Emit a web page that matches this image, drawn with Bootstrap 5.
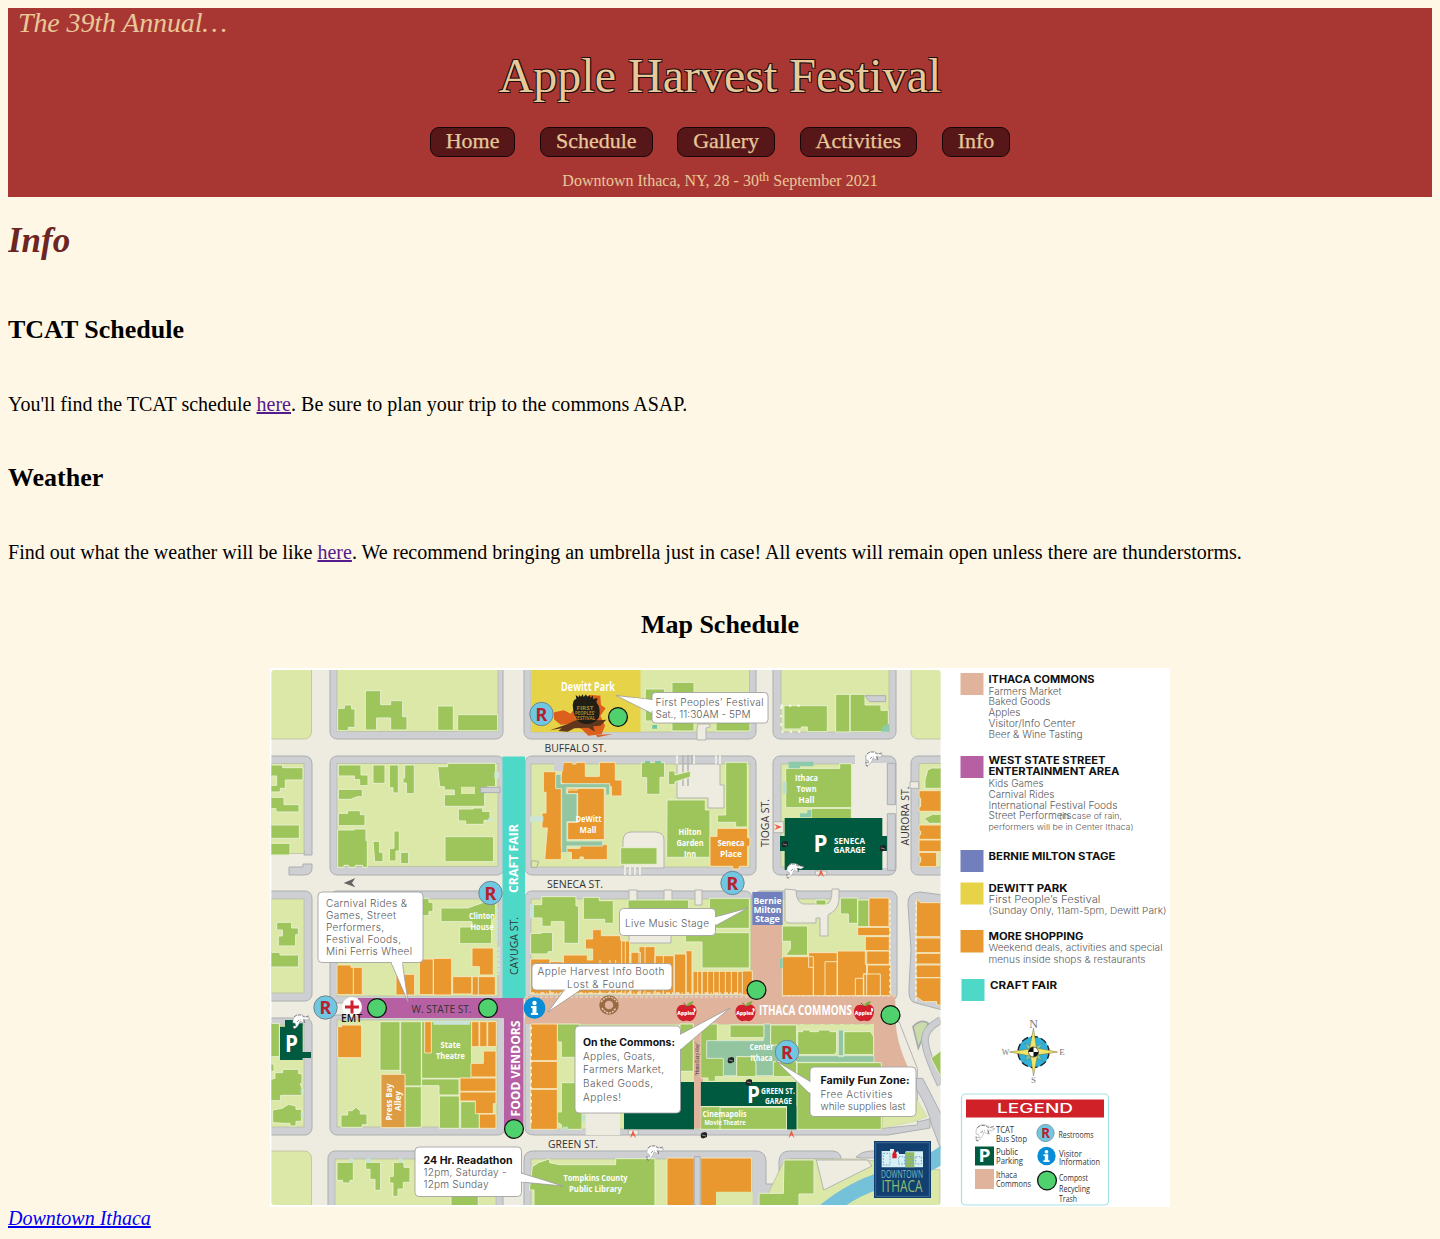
<!DOCTYPE html>
<html lang="en">
<head>
<meta charset="utf-8">
<meta name="viewport" content="width=device-width, initial-scale=1">
<title>Apple Harvest Festival - Info</title>
<link href="https://cdn.jsdelivr.net/npm/bootstrap@5.3.0/dist/css/bootstrap.min.css" rel="stylesheet">
<style>
body{margin:8px;background:#fff7e6;color:#000;font-family:"Liberation Serif",serif;font-size:20px;line-height:22px}
.fest-header{background:#a83733;color:#e8c799;height:189px}
.annual{font-size:28px;line-height:30px;font-style:italic;padding-left:10px;letter-spacing:-.12px}
.fest-title{font-size:48px;line-height:54px;font-weight:400;margin:11px 0 24px;text-shadow:-1px -1px 0 #1c100c,1px -1px 0 #1c100c,-1px 1px 0 #1c100c,1px 1px 0 #1c100c}
.fest-nav{gap:24.5px;height:30px}
.fest-nav a{font-size:22px;line-height:24px;color:#e8c799;background:#571719;border:1px solid #150607;border-radius:9px;padding:1px 15px 3px;text-decoration:none;-webkit-text-stroke:.25px #e8c799}
.fest-date{font-size:16px;line-height:18px;margin-top:15px}
.fest-date sup{font-size:13.3px;line-height:0;top:-.4em}
.page-title{font-size:35px;line-height:40px;font-style:italic;font-weight:700;color:#6b2624;margin:24px 0 54px}
.section-title{font-size:26px;line-height:30px;font-weight:700;margin:0}
.copy{margin:48px 0;letter-spacing:.015px}
.copy a{color:#551a8b}
.map-title{margin-top:-1px;margin-bottom:28px}
.fest-map{width:900px;height:539px}
.foot{line-height:22px;font-style:italic}
.foot a{color:#0000ee}
.curb{fill:#cdcfd2;stroke:#acafb0;stroke-width:1}
.s3 .curb,.s3 .road{stroke-width:3}
.grass{fill:#dce8a7;stroke:#b4b9a2;stroke-width:.7}
.road{fill:#eeebe0;stroke:#b3b5b3;stroke-width:1}
.g{fill:#9dc55b;stroke:#e8f0cf;stroke-width:3}
.o{fill:#e8982e;stroke:#f6e5b9;stroke-width:3}
.t{fill:#93c5a1;stroke:#d5e8cc;stroke-width:3}
.dk{fill:#005a3f}
.cm{fill:#e0b49c}
.pl{fill:#b65fa3}
.tq{fill:#4dd8c8}
.call{fill:#fff;stroke:#999;stroke-width:.8}
.fest-map text{font-family:"Open Sans",sans-serif;fill:#333}
.fest-map .go text{font-family:Inter,"Open Sans",sans-serif;font-size:10.1px;fill:#5b5b5b;font-weight:300}
.fest-map .go text.b{font-weight:700;fill:#111;font-size:9.8px}
.fest-map .w text{fill:#fff;font-weight:700;font-size:8.6px}
.fest-map .st text{font-size:11.4px}
.fest-map .lg text{font-size:9px}
</style>
</head>
<body>
<header class="fest-header">
  <div class="annual">The 39th Annual…</div>
  <h1 class="fest-title text-center">Apple Harvest Festival</h1>
  <nav class="fest-nav d-flex justify-content-center">
    <a href="#">Home</a><a href="#">Schedule</a><a href="#">Gallery</a><a href="#">Activities</a><a href="#">Info</a>
  </nav>
  <div class="fest-date text-center">Downtown Ithaca, NY, 28 - 30<sup>th</sup> September 2021</div>
</header>
<main>
  <h2 class="page-title">Info</h2>
  <h3 class="section-title">TCAT Schedule</h3>
  <p class="copy">You'll find the TCAT schedule <a href="#">here</a>. Be sure to plan your trip to the commons ASAP.</p>
  <h3 class="section-title">Weather</h3>
  <p class="copy">Find out what the weather will be like <a href="#">here</a>. We recommend bringing an umbrella just in case! All events will remain open unless there are thunderstorms.</p>
  <h3 class="section-title map-title text-center">Map Schedule</h3>
  <svg class="fest-map d-block mx-auto" viewBox="270 668 900 539" role="img" aria-label="Festival map">
    <defs>
      <clipPath id="mapclip"><rect x="271.5" y="670" width="669" height="535" rx="3"/></clipPath>
      <g id="rr"><circle r="11.7" fill="#6fc7e2" stroke="#718790" stroke-width="1"/><text y="6.500" text-anchor="middle" style="font-family:'Noto Sans';font-size:18px;font-weight:700;fill:#b91f2e">R</text></g>
      <circle id="dot" r="9.4" fill="#4fd26d" stroke="#111" stroke-width="1.3"/>
      <g id="inf"><circle r="10.8" fill="#078cd6"/><circle cy="-5" r="2.200" fill="#fff"/><path d="M-3.500-2H2V5H3.600V7H-3.600V5H-2V0H-3.500Z" fill="#fff"/></g>
      <g id="apple"><path d="M0-6C-5-9-10-6-10 0C-10 6-5 10-2 9Q0 8 2 9C6 10 10 5 10-1C10-7 5-9 0-6Z" fill="#d21f2b"/><path d="M0-6Q1-10 7-11Q6-6 0-6" fill="#7dab3d"/><path d="M0-5Q-1-8-3-9" fill="none" stroke="#7c5030"/><text x="-.5" y="2.500" text-anchor="middle" style="font-size:5px;font-weight:800;fill:#fff">Apples</text><path d="M7-4Q10-4 9-1L7 1Q8-1 7-2Z" fill="#fff"/></g>
      <g id="cow"><path d="M-8 2Q-9-3-5-6Q0-8 5-4L9-3L6-1L2-2L3 2L-1 0L-2 3L-4 6L-7 8L-8 5L-5 5L-6 2Z" fill="#fff" stroke="#999" stroke-width=".5"/><path d="M-7-4Q-2-8 3-4L8-5M-4 1Q-2-2 0-1M3-1L4 3M-6 8Q-9 9-8 4" fill="none" stroke="#444" stroke-width=".6" stroke-dasharray="3 1.300"/></g>
      <path id="arr" d="M-3 4L0-4L3 4L0 1Z" fill="#ef5a45"/>
      <g id="bike"><circle cx="-1" cy="1" r="2.400" fill="#222"/><path d="M-3-2L1-3L3-2V2L0 3Z" fill="#222"/><path d="M-2 0L2 1" stroke="#888"/></g>
    </defs>
    <rect x="270" y="668" width="900" height="539" fill="#fff"/>
    <g clip-path="url(#mapclip)">
      <rect x="271" y="669" width="670" height="537" fill="#eeebe0"/>
      <!-- city blocks: kerb, then grass -->
      <g class="curb">
        <rect x="330" y="660" width="173" height="79" rx="7"/><rect x="524" y="660" width="232" height="79" rx="7"/><rect x="773" y="660" width="123" height="79" rx="7"/>
        <path d="M264 756H304Q312 756 312 764V855H304V850H264Z"/><path d="M289 867H303V864H312V868Q312 875 304 875H289Z"/>
        <rect x="330" y="756" width="174" height="119" rx="7"/><rect x="525" y="756" width="231" height="119" rx="7"/><rect x="773" y="756" width="123" height="119" rx="7"/><rect x="911" y="756" width="60" height="119" rx="7"/>
        <rect x="250" y="891" width="62" height="110" rx="7"/><rect x="330" y="891" width="174" height="112" rx="7"/><rect x="525" y="891" width="227" height="110" rx="7"/><rect x="754" y="891" width="143" height="110" rx="7"/>
        <path d="M908 905Q907 892 920 892L950 896V1012L916 1003Q908 1002 909 988L911 950Z"/>
        <rect x="250" y="1018" width="62" height="117" rx="7"/><rect x="330" y="1015" width="175" height="120" rx="7"/>
        <path d="M525 1018H890V1128L930 1119V1128L888 1135H535Q525 1135 525 1128Z"/>
        <rect x="328" y="1151" width="175" height="70" rx="7"/><path d="M524 1220V1160Q524 1151 534 1151H757Q766 1152 766 1162V1184H779V1162Q779 1151 790 1151H833Q842 1152 841 1161Q837 1164 834 1159H790V1220Z"/>
        <path d="M856 1157Q862 1151 870 1151H930V1158H861Z"/>
      </g>
      <g class="grass">
        <rect x="260" y="660" width="51.500" height="79" rx="7"/><rect x="337" y="660" width="161" height="71.500"/><rect x="531" y="660" width="218.500" height="72"/><rect x="781" y="660" width="108" height="72"/><rect x="911" y="660" width="60" height="79" rx="7"/>
        <rect x="260" y="763.500" width="44" height="90"/><rect x="337" y="763.500" width="161" height="103"/><rect x="531" y="764" width="219" height="103"/><rect x="781" y="764" width="107" height="103"/><rect x="919" y="763.500" width="40" height="103.500"/>
        <rect x="260" y="899" width="44" height="94"/><rect x="337" y="899" width="161" height="97"/><rect x="531" y="899" width="220" height="96"/><rect x="781" y="899" width="108" height="97"/>
        <rect x="260" y="1025" width="44" height="102"/><rect x="337" y="1020" width="160" height="107"/><rect x="531" y="1024" width="352" height="105"/>
        <rect x="260" y="1151" width="51.500" height="70" rx="7"/><rect x="335" y="1159" width="161" height="60"/><rect x="531" y="1159" width="221" height="60"/><path d="M785 1159H860L940 1170V1210H760Z"/>
      </g>
      <g class="road"><path d="M677 764V798H708V808H724V785H720V764Z"/><path d="M623 868V840Q624 832 631 832H656Q664 833 664 840V868Z"/><path d="M855 755H865V763H888V805H896V814H888V868H852V764H855Z" stroke="none"/><path d="M697 729V740H706V728L710 727V724H698Z"/><path d="M629 930H671V943H629ZM629 890H637V905H629ZM664 890H672V915H664ZM695 890H702V905H695Z"/><path d="M785 889V920Q785 923 790 923H816V918H820V936H828V915Q838 910 839 900V889H832Q832 904 826 904H803Q796 902 796 890Z"/></g>
      <path d="M683 755V786M688 755V786M692 755V764" stroke="#b3b5b3" stroke-width="1.500" fill="none"/><path d="M677 755.500V764M694 755.500V764M716 755.500V764M720 755.500V764" stroke="#eeebe0" stroke-width="2"/><path d="M625 866V875M630 866V875M635 866V875M640 866V875" stroke="#eeebe0" stroke-width="2" fill="none"/>
      <!-- festival streets -->
      <path class="cm" d="M525 996H752V924H782V995H895L897 1040L910 1067V1070H882V1024H703V1128H694V1024H525Z"/>
      <path d="M525 997H751M782 996H895" stroke="#efe2cb" stroke-dasharray="3 2" fill="none"/>
      <path d="M800 1025H881V1066" stroke="#dce8a7" stroke-width="2" stroke-dasharray="4 6" fill="none"/>
      <rect class="tq" x="502.500" y="756.500" width="22.500" height="242"/><path class="pl" d="M358 998H523.500V1130H504V1018H358Z"/>
      <rect x="531.500" y="668" width="109" height="64" fill="#e6d348"/>

      <g class="s3" transform="translate(270 665) scale(.33333)">
        <g class="g"><path d="M203 130h20v-10h22v12h10v55h-20v10h-32z"/><path d="M286 77h46v42h30v-12h36v48h13v40h-49v-36h-42v36h-34z"/><path d="M503 123h47v73h-47zM563 149h120v48h-120z"/>
        <path d="M0 300h38v8h61v37h-53v25h-15v11h-31v-20h20v-28h-20zM0 397h42v22h45v22h-69v-10h-18zM0 480h88v40h-88zM0 535h60v35h-60z"/>
        <path d="M205 300h68v30h21v32h-25v-18h-16v-11h-48zM309 300h36v55h-36zM358 300h27v84h-16v-16h-11zM404 300h29v86h-24v-32h-10v-15h5z"/>
        <path d="M503 305h30v-10h144v70h-25v21h-8v38h-121v-35h30v-14h-30v-10h-14z"/><path d="M205 373h72v22h-15l-20 8h-37zM205 445h28v-8h38v12h14v33h-80zM203 495h50v-3h35v35h4v80h-14v-6h-22v6h-20v-6h-14v6h-19z"/><path d="M565 432h45v-3h28v10h22v27h-18v12h-55v-10h-22zM525 515h146v75h-146zM309 529h20v33h10v28h-25zM372 498h16v60h-10v30h-20v-38h14zM392 562h24v34h-24z"/></g>
        <path fill="#dce8a7" d="M573 365h42v22h-42z"/><path class="curb" d="M632 367h58v16h-58z"/><path fill="#cfe5d7" d="M673 322h14v18h-14zM655 459h15v10h-15z"/>
      </g>

      <g class="s3" transform="translate(500 665) scale(.33333)">
        <g class="g"><path d="M436 72h58v28h22v-48h66v146h-66v-60h-22v30h-58zM648 165h102v33h-102zM424 292h70v45h-14v51h-40v-50h-16zM505 318h20v12l46-12v18l-46 15v8h-20zM652 450h25v-158h65v194h-35v-14h-55zM501 405h115v30h14v142h-130zM362 548h109v50h-109z"/></g>
        <g class="o"><path d="M190 292h28v5h10v-5h28v42h42v-42h48v53h20v48h-32v-28h-102v10h-42v-20h-10zM130 320h38v25h16v205h56v-12h82v46h-72v-8h-10v8h-26v-22h-30v22h-50l8-95h-16v-45h12v-62h-8zM203 370h110v154h-110v-52h30v-86h-30z"/><path d="M651 490h92v28h7v26h-7v60h-25v8h-20v-8h-68v-90h21z"/></g>
        <path class="t" d="M167 328h16v28h146v34h-12v-22h-118v18h32v84h-30v58h107v15h-107v20h-16v-192h-18z"/>
        <path d="M90 454h40v16h-40z" fill="#cce5d4"/><path d="M162 292h28v26h-28z" fill="#cdcfd2"/>
        <g fill="#6fc3a1"><path d="M435 289h15v6h-15zM465 289h18v6h-18zM457 180h14v11h-14z"/></g>
        <!-- First Peoples emblem -->
        <path d="M162 142l30-6 20 10 38-50 25-6 26 2 2 28 14 10-16 22 14 30-10 26-40 4-20-20-37-15-26 2-20-16z" fill="#dc5f1c"/><path d="M150 196l55-20q50-26 90-10l24-2-18 18-22 2 6 16-20-12-42 2-20 10-28-2 10-8z" fill="#60371c"/><path d="M219 130q-3-26 10-28l-2-12 9 7 1-7 6 5 5-7 3 8 7-8 4 8 7-6 2 8 8-6v10l14-3-4 12q16 20 7 48-15 20-40 18-31-2-37-47z" fill="#211e16"/><path d="M288 210l50-3-45 10z" fill="#dc5f1c"/>
      </g>

      <g class="s3" transform="translate(730 665) scale(.33333)">
        <g class="g"><path d="M162 122h130v78h-60v-14h-18v6h-52zM317 88h43v113h-43zM360 88h45v32h48v16h22v64h-115zM167 310h162v-14h36v132h-198zM244 430h120v32h-120zM585 370v-25l8-30 12-6h30v61zM583 460l25-12h30v27h-40z"/></g>
        <g class="o"><path d="M567 377h70v62h-70v-12l5-2v-25l-5-3zM567 480h70v43h-70v-12l5-2v-10l-5-3zM567 525h70v35h-70zM567 562h53v43h-53v-12l5-2v-15l-5-3z"/></g>
        <g class="curb"><path d="M405 92h62v18h-48z"/></g>
        <path d="M152 122h65M154 125v75h60" stroke="#f4f7ea" stroke-width="7" stroke-dasharray="7 18" fill="none"/>
        <g fill="#8bcbab"><path d="M176 290h74v14h-40v6h-34zM210 445h22v-10h12v22h-34zM454 200q0-20 24-23v23z"/><path d="M158 350h12v36h-12z" fill="#bcdfcb"/></g>
        <path class="curb" d="M472 295h24v124h-24zM472 446h24v170h-24z" stroke="none"/>
        <path class="dk" d="M164 459h293v54h14v45h-14v57h-293v-57h-14v-45h14z"/><path class="road" d="M131 470h30v33h-30zM256 618h34v12h-34zM540 350h26v20h-26z" stroke="none"/>
      </g>

      <g class="s3" transform="translate(270 840) scale(.33333)">
        <g class="g"><path d="M20 247h45v17h20v20h-8v34h-52v-30h12v-18h-17zM0 337h30v8h56v36h-86zM455 175h22v12h12v28h-12v12h-22zM513 204h80l70-25h14v60h-12v72h-96v-50h37v-16h-93z"/></g>
        <g class="o"><path d="M201 375h42v7h34v82h-76zM250 382v82M378 403h56v62h-56zM448 357h42v107h-42zM490 355h55v110h-55zM548 410h58v52h-58zM606 410h70v55h-70zM606 324h64v81h-42v-25h-22zM625 410v55"/></g>
        <path d="M680 205v100M685 320v85" stroke="#cde5d6" stroke-width="9" stroke-dasharray="12 4"/>
        <path d="M221 129l35-15-10 15 10 13z" fill="#666"/>
      </g>

      <g class="s3" transform="translate(500 840) scale(.33333)">
        <g class="g"><path d="M125 170h103v28h8v112h-44v-65h-38v14h-28v-25h-32v-40h31zM250 172h48v10h42v68h-26v-12h-64zM92 280h32v-3h34v58h-14v7h-52zM384 180h182v80h-182zM628 175h120v90h-120zM606 278h142v106h-142v-78h-50v-20h50z"/></g>
        <g class="o"><path d="M92 357h58v105h-58zM150 365h40v97h-40zM190 345h72v15h16v-33h-22v-30h22v-28h26v18h58v14h14v160h-186zM365 303h24v160h-24zM393 337h28v126h-28zM417 320h48v143h-48zM465 347h58v116h-58zM522 342h36v121h-36zM558 332h18v131h-18z"/><path d="M579 394h27v69h-27zM593 394v69M606 394h150v69h-150zM623 394v69M641 394v69M658 394v69M676 394v69M694 394v69M713 394v69"/><path d="M300 360v100M330 360v100M347 360v100M435 320v143M490 347v116"/></g>
        <path d="M92 460h640" stroke="#f3dfbd" stroke-width="6" stroke-dasharray="12 6 3 8"/>
        <path d="M94 62l22 2-6 18h-16z" fill="#dce8a7" stroke="#afb0a2" stroke-width="3"/><path d="M90 192h12v42h-12z" fill="#c9e3d8"/>
      </g>

      <g class="s3" transform="translate(730 870) scale(.33333)">
        <g class="g"><path d="M157 168h76v88h-66l14-20v-22h-24zM258 90h30v15h-30zM331 84h52v76h-28v-28h-24zM383 90h34v80h-34z"/></g>
        <g class="o"><path d="M157 260h93v117h-93zM236 248h86v129h-72v-85h-14zM285 275h37v102h-37zM322 243h88v134h-88zM376 325h25v52h-25zM417 84h60v86h-60zM383 172h97v25h-97zM406 200h72v42h-72zM406 243h72v40h-72zM412 285h70v92h-82v-65h12zM401 312h50v65h-50zM560 88l12 10h60v102h-74zM558 204h74v44h-74zM558 250h74v32h-74zM558 285h74v38h-74zM558 323h74v82h-12v-10h-40l-22-15zM37 303h30v72H37z"/></g>
        <path d="M480 90v285M558 95v300" stroke="#f7efd6" stroke-width="5" stroke-dasharray="8 9"/>
        <path fill="#7180bd" d="M67 66h91v99h-91z"/><path d="M150 265h8v30h-8z" fill="#8bcbab"/>
        <path d="M549 470q25-25 46-10l-30 75z" fill="#c9dcaa" stroke="#a7aaac" stroke-width="5"/>
      </g>

      <g class="s3" transform="translate(270 1020) scale(.33333)">
        <g class="g"><path d="M0 10h28v100H0zM38 148h48v13h10v30h-5l5 15v20h-64v16h-37v-62l20-5v-17h23zM8 270l28-5 20-12 22 5v10h17v36h-17v14h-18v-8h-20l-32-2zM330 5h60v146h-60zM392 5h62v193h-62zM404 200h50v122h-50zM455 5h150v170h-150zM455 177h112v48h-60v-28h-52zM508 228h60v97h-60zM572 245h56v80h-56zM213 285h20v-13h14l10-10 14 10v10h20v32h-14v8h-64zM201 427h49v54h-10v8h-22v-8h-17zM287 427h45v84h-17v-33h-15v-30h-13zM370 427h32v15h18v45h-20v20h-16v22h-15v-40h-10v-20h11zM543 520h82v50h-82zM0 132h12v22H0z"/></g>
        <g class="o"><path d="M203 20h12v-5h60v98h-72zM464 5h20v94h-20zM605 5h22v75h-22zM629 5h22v75h-22zM653 5h26v75h-26zM603 130h37v-37h38v78h-75zM570 174h108v40h-108zM570 216h108v35h-8v30h-54v-38h-46zM628 282h50v43h-50z"/><path d="M333 163h72v160h-72z" fill="#dd9c42"/></g>
        <path class="dk" d="M30 20h15V0h40v10h13v86h25v18h-25v6h-68z"/>
        <g fill="#c9e3d8"><path d="M92 208h10v12h-10zM92 278h10v12h-10zM237 415h13v14h-13zM289 415h13v14h-13zM387 415h10v14h-10zM490 2h110v12h-110z"/></g>
      </g>

      <g class="s3" transform="translate(500 1020) scale(.33333)">
        <path d="M257 180h103v165h-103z" fill="#eeebe0"/>
        <g class="g"><path d="M172 12h66v100h-54v-46h-12zM184 188h62v140h-62v-14l-14-8v-30h14zM540 12h40v142h-40zM602 12h50v50h54v108h-60v14h-22v-10h-22zM602 260h300v68h-300zM97 440l18-12 34-12v12l31 6h167v-18h118v154H102v-60h-14z"/></g>
        <g class="o"><path d="M92 12h80v110h-80zM92 124h80v82h-80zM92 208h80v120h-80zM501 414h82v150h-82zM602 414h153v155h-153z"/></g>
        <path fill="#dce8a7" d="M648 515h110v60H648z"/>
        <path class="dk" d="M372 186h210v142h-210zM602 186h270v72h18v70h-28v-70H602z"/><path class="cm" d="M584 5h18v320h-18z"/><path class="road" d="M385 330h30v14h-30z"/>
        <path d="M93 20v300" stroke="#f4efd6" stroke-width="6" stroke-dasharray="8 12"/><path class="curb" d="M583 410h18v160h-18z"/><path d="M188 320h16v10h-16zM246 285h10v18h-10z" fill="#bfe1cd"/>
      </g>

      <g class="s3" transform="translate(730 1020) scale(.33333)">
        <path class="road" d="M457 5h50l55 140v170l-105 10z" stroke="none"/><path class="grass" d="M457 240h105l30 50-40 15-95 20z"/>
        <path class="cm" d="M432 5h65q2 60 36 135H432z"/><path class="curb" d="M558 205q37 60 47 110l30 80v-110l-57-110h-20z"/><path d="M632 0q-55 30-46 70 4 35 46 125" fill="none" stroke="#afb2b4" stroke-width="23"/><path d="M632 0q-55 30-46 70 4 35 46 125" fill="none" stroke="#cdcfd2" stroke-width="17"/><path class="g" d="M603 115l30-23v80z"/>
        <path d="M270 555q85-70 185-100 100-20 180-80v60q-100 60-195 75-50 18-90 45z" fill="#75c1da"/>
        <g class="t" stroke="none"><path d="M-70 62h170v-50h22v53h75v42h235v20H197v40H-20v-52h-50zM325 30h16v80h-16z"/></g>
        <g class="g"><path d="M0 15h102v38H0zM122 15h78v60q-30-20-50 0h-28zM203 35h15v-5h22v5h25v-5h35v5h20v60l-8 9H203zM342 35h80l9 15v54h-89zM20 110h50l8 20v40H20zM130 125h70v45h-70zM201 128h253v200H201zM162 420h90v102h-45v35H87v-37h73zM-30 262h200v66H-30z"/></g>
        <path class="dk" d="M-30 186h229v142h-28v-70H-30z"/><path class="road" d="M259 420l22 90 145-72-14-18z"/>
        <path d="M432 363h171v171h-171z" fill="#113f70"/><path d="M437 368h161v161h-161z" fill="none" stroke="#426895" stroke-width="3"/><g fill="#d7f0f5"><path d="M455 393h25v-6h12v16l12-10 8 20v29h-57zM502 402h25v-8h52v48h-77z"/></g><path d="M525 397h28v45h-28z" fill="#92bc64"/><path d="M460 400h20v35h-20zM506 410h18v22h-18zM530 410h17v22h-17zM557 410h17v22h-17z" fill="none" stroke="#74a8c4" stroke-width="3" stroke-dasharray="5 4"/><path d="M487 403l6-13 7 13v12h-13z" fill="#d51d2a"/>
      </g>

      <g class="w" text-anchor="middle">
        <text x="588" y="691" textLength="54" lengthAdjust="spacingAndGlyphs" style="font-size:11.500px">Dewitt Park</text>
        <text x="585" y="709.500" textLength="17" lengthAdjust="spacingAndGlyphs" style="font-size:5px;fill:#ae842d">FIRST</text><text x="585" y="714.500" textLength="20" lengthAdjust="spacingAndGlyphs" style="font-size:5px;fill:#ae842d">PEOPLES'</text><text x="585" y="719.500" textLength="21" lengthAdjust="spacingAndGlyphs" style="font-size:5px;fill:#ae842d">FESTIVAL</text>
        <text x="588.500" y="822" textLength="26" lengthAdjust="spacingAndGlyphs">DeWitt</text><text x="588" y="832.500" textLength="17" lengthAdjust="spacingAndGlyphs">Mall</text>
        <text x="690" y="835" textLength="23" lengthAdjust="spacingAndGlyphs">Hilton</text><text x="690" y="846" textLength="27" lengthAdjust="spacingAndGlyphs">Garden</text><text x="690" y="857" textLength="12" lengthAdjust="spacingAndGlyphs">Inn</text>
        <text x="731" y="846" textLength="27" lengthAdjust="spacingAndGlyphs">Seneca</text><text x="731" y="857" textLength="22" lengthAdjust="spacingAndGlyphs">Place</text>
        <text x="806.500" y="781" textLength="23" lengthAdjust="spacingAndGlyphs">Ithaca</text><text x="806.500" y="792" textLength="20" lengthAdjust="spacingAndGlyphs">Town</text><text x="806.500" y="802.500" textLength="16" lengthAdjust="spacingAndGlyphs">Hall</text>
        <text x="820.500" y="852" style="font-size:23px" textLength="14" lengthAdjust="spacingAndGlyphs">P</text><text x="849.500" y="843.500" textLength="31" lengthAdjust="spacingAndGlyphs" style="font-size:9.500px">SENECA</text><text x="849.500" y="852.500" textLength="32" lengthAdjust="spacingAndGlyphs" style="font-size:9.500px">GARAGE</text>
        <text x="482" y="918.500" textLength="26" lengthAdjust="spacingAndGlyphs">Clinton</text><text x="482" y="929.500" textLength="23" lengthAdjust="spacingAndGlyphs">House</text>
        <text x="767.500" y="904" textLength="28" lengthAdjust="spacingAndGlyphs" style="font-size:9.500px">Bernie</text><text x="767.500" y="913" textLength="28" lengthAdjust="spacingAndGlyphs" style="font-size:9.500px">Milton</text><text x="767.500" y="922" textLength="25" lengthAdjust="spacingAndGlyphs" style="font-size:9.500px">Stage</text>
        <text x="805.500" y="1014.500" textLength="93" lengthAdjust="spacingAndGlyphs" style="font-size:14px">ITHACA COMMONS</text>
        <text x="450.500" y="1048" textLength="20" lengthAdjust="spacingAndGlyphs">State</text><text x="450.500" y="1058.500" textLength="29" lengthAdjust="spacingAndGlyphs">Theatre</text>
        <text x="291.500" y="1052" style="font-size:23px" textLength="13" lengthAdjust="spacingAndGlyphs">P</text>
        <text transform="translate(391.500 1102) rotate(-90)" textLength="37" lengthAdjust="spacingAndGlyphs">Press Bay</text><text transform="translate(401 1101) rotate(-90)" textLength="20" lengthAdjust="spacingAndGlyphs">Alley</text>
        <text x="595.500" y="1180.500" textLength="64" lengthAdjust="spacingAndGlyphs">Tompkins County</text><text x="595.500" y="1191.500" textLength="53" lengthAdjust="spacingAndGlyphs">Public Library</text>
        <text x="761.500" y="1050" textLength="24" lengthAdjust="spacingAndGlyphs">Center</text><text x="761.500" y="1060.500" textLength="22" lengthAdjust="spacingAndGlyphs">Ithaca</text>
        <text x="753.500" y="1103" style="font-size:23px" textLength="13" lengthAdjust="spacingAndGlyphs">P</text><text x="778" y="1094" textLength="34" lengthAdjust="spacingAndGlyphs" style="font-size:9.500px">GREEN ST.</text><text x="778.500" y="1103.500" textLength="27" lengthAdjust="spacingAndGlyphs" style="font-size:9.500px">GARAGE</text>
        <text x="724.500" y="1117" textLength="44" lengthAdjust="spacingAndGlyphs">Cinemapolis</text><text x="725" y="1125" textLength="41" lengthAdjust="spacingAndGlyphs" style="font-size:6.500px">Movie Theatre</text>
        <text transform="translate(518 858.500) rotate(-90)" textLength="69" lengthAdjust="spacingAndGlyphs" style="font-size:13px">CRAFT FAIR</text><text transform="translate(520 1068.500) rotate(-90)" textLength="96" lengthAdjust="spacingAndGlyphs" style="font-size:13px">FOOD VENDORS</text>
        <text x="902" y="1178" textLength="42" lengthAdjust="spacingAndGlyphs" style="font-size:10px;font-weight:400;fill:#77bcc5">DOWNTOWN</text><text x="902" y="1191.500" textLength="41" lengthAdjust="spacingAndGlyphs" style="font-size:17px;font-weight:400;fill:#8fbe72">ITHACA</text>
      </g>
      <g class="st" text-anchor="middle">
        <text x="575.500" y="752" textLength="62" lengthAdjust="spacingAndGlyphs">BUFFALO ST.</text><text x="575" y="888" textLength="56" lengthAdjust="spacingAndGlyphs">SENECA ST.</text><text x="573" y="1148" textLength="50" lengthAdjust="spacingAndGlyphs">GREEN ST.</text><text x="441.500" y="1012.500" textLength="60" lengthAdjust="spacingAndGlyphs">W. STATE ST.</text>
        <text transform="translate(517.500 946) rotate(-90)" textLength="58" lengthAdjust="spacingAndGlyphs">CAYUGA ST.</text><text transform="translate(768.500 823) rotate(-90)" textLength="48" lengthAdjust="spacingAndGlyphs">TIOGA ST.</text><text transform="translate(909 816) rotate(-90)" textLength="59" lengthAdjust="spacingAndGlyphs">AURORA ST.</text><text transform="translate(699 1059) rotate(-90)" textLength="33" lengthAdjust="spacingAndGlyphs" style="font-size:4.500px">"Home Dairy Alley"</text>
      </g>
      <g class="call">
        <path d="M655 700L616 695.500L653 714Z"/><rect x="652" y="692.500" width="116" height="30.500" rx="3.500"/><path d="M656 700.500L630 697.500L656 713Z" stroke="none"/>
        <path d="M390 960L408 1002L402 960Z"/><rect x="318" y="892" width="105" height="70.500" rx="4"/><path d="M391.500 962L402 961L402.500 965H392.500Z" stroke="none"/>
        <path d="M715 917L748 908L715 926Z"/><rect x="619.500" y="908.500" width="96" height="27" rx="4"/><path d="M714 917.500L719 916.500V923L714 925Z" stroke="none"/>
        <path d="M565 989L548 1012L582 989Z"/><rect x="532" y="963.500" width="140" height="26.500" rx="4"/><path d="M566 988.500H581L578 991H564.500Z" stroke="none"/>
        <path d="M679 1035L730 1008L679 1051Z"/><rect x="575" y="1026" width="105.500" height="87" rx="4"/><path d="M678 1036L683 1033.500V1047L678 1051Z" stroke="none"/>
        <path d="M811 1082L776 1061L811 1095Z"/><rect x="810" y="1067" width="106" height="49.500" rx="4"/><path d="M812 1083L806 1080V1089.500L812 1094Z" stroke="none"/>
        <path d="M521 1173L563 1186L521 1182Z"/><rect x="415" y="1147" width="106.500" height="49.500" rx="4"/><path d="M520 1173.500L525 1175V1182L520 1181.500Z" stroke="none"/>
      </g>
      <g class="go">
        <text x="655.500" y="706" textLength="108">First Peoples’ Festival</text><text x="655.500" y="717.500" textLength="95">Sat., 11:30AM - 5PM</text>
        <text x="326" y="906.500" textLength="81">Carnival Rides &amp;</text><text x="326" y="918.500" textLength="70">Games, Street</text><text x="326" y="930.500" textLength="58">Performers,</text><text x="326" y="943" textLength="75">Festival Foods,</text><text x="326" y="955" textLength="86">Mini Ferris Wheel</text>
        <text x="625" y="926.500" textLength="84">Live Music Stage</text><text x="537.500" y="975" textLength="127">Apple Harvest Info Booth</text><text x="567" y="987.500" textLength="67">Lost &amp; Found</text>
        <text class="b" x="583" y="1045.500" textLength="92" lengthAdjust="spacingAndGlyphs">On the Commons:</text><text x="583" y="1059.500" textLength="72">Apples, Goats,</text><text x="583" y="1073" textLength="81">Farmers Market,</text><text x="583" y="1087" textLength="70">Baked Goods,</text><text x="583" y="1100.500" textLength="38">Apples!</text>
        <text class="b" x="820.500" y="1083.500" textLength="89" lengthAdjust="spacingAndGlyphs">Family Fun Zone:</text><text x="820.500" y="1097.500" textLength="72">Free Activities</text><text x="820.500" y="1110" textLength="85" lengthAdjust="spacingAndGlyphs">while supplies last</text>
        <text class="b" x="423.500" y="1163.500" textLength="89" lengthAdjust="spacingAndGlyphs">24 Hr. Readathon</text><text x="423.500" y="1175.500" textLength="83">12pm, Saturday -</text><text x="423.500" y="1187.500" textLength="65">12pm Sunday</text>
      </g>
      <use href="#rr" x="541.500" y="714"/><use href="#rr" x="490.500" y="893"/><use href="#rr" x="732.500" y="883"/><use href="#rr" x="325.500" y="1007.500"/><use href="#rr" x="787" y="1052"/>
      <use href="#dot" x="618" y="717"/><use href="#dot" x="377" y="1008"/><use href="#dot" x="488" y="1008"/><use href="#dot" x="756.500" y="990"/><use href="#dot" x="890.500" y="1015"/><use href="#dot" x="514" y="1129"/>
      <circle cx="352" cy="1007" r="10" fill="#fff"/><path d="M350.500 1000.500H353.500V1005.500H359V1008.500H353.500V1013.500H350.500V1008.500H345V1005.500H350.500Z" fill="#cf2030"/><text x="351.500" y="1021.500" text-anchor="middle" textLength="21" lengthAdjust="spacingAndGlyphs" style="font-size:10.500px;font-weight:600;fill:#111">EMT</text>
      <use href="#inf" x="534.500" y="1008"/><use href="#apple" x="686.500" y="1012"/><use href="#apple" x="745.500" y="1012"/><use href="#apple" x="864" y="1012"/>
      <circle cx="609" cy="1005" r="7" fill="none" stroke="#9a6a45" stroke-width="5.500"/><path d="M601 1002Q609 992 617 1002M602 1008Q609 1018 616 1008" stroke="#e5c9ae" stroke-width="1.500" stroke-dasharray="2 1" fill="none"/>
      <use href="#cow" x="874" y="758"/><use href="#cow" x="795" y="870"/><use href="#cow" x="301" y="1021"/><use href="#cow" x="655" y="1152"/>
      <use href="#arr" x="821" y="873"/><use href="#arr" x="633" y="1134"/><use href="#arr" x="791.500" y="1134"/><use href="#arr" transform="translate(778 827) rotate(90)"/>
      <use href="#bike" x="785" y="844"/><use href="#bike" x="883" y="848"/><use href="#bike" x="731" y="1060"/><use href="#bike" x="704" y="1135"/><use href="#bike" x="749" y="1082"/>
    </g>

    <!-- map key -->
    <path class="cm" d="M960.500 673H983.500V695H960.500Z"/><path class="pl" d="M960.500 756H983.500V778H960.500Z"/><path d="M960.500 850H983.500V872H960.500Z" fill="#7180bd"/><path d="M960.500 882.500H983.500V904.500H960.500Z" fill="#e6d348"/><path d="M960.500 930H983.500V952.500H960.500Z" fill="#e8982e"/><path class="tq" d="M961.500 979H984.500V1001H961.500Z"/>
    <g class="go">
      <text class="b" x="988.500" y="682.500" textLength="106" lengthAdjust="spacingAndGlyphs">ITHACA COMMONS</text><text x="988.500" y="694.500" textLength="73" lengthAdjust="spacingAndGlyphs">Farmers Market</text><text x="988.500" y="705" textLength="62" lengthAdjust="spacingAndGlyphs">Baked Goods</text><text x="988.500" y="715.500" textLength="32" lengthAdjust="spacingAndGlyphs">Apples</text><text x="988.500" y="726.500" textLength="87" lengthAdjust="spacingAndGlyphs">Visitor/Info Center</text><text x="988.500" y="737.500" textLength="94" lengthAdjust="spacingAndGlyphs">Beer &amp; Wine Tasting</text>
      <text class="b" x="988.500" y="764" textLength="117" lengthAdjust="spacingAndGlyphs">WEST STATE STREET</text><text class="b" x="988.500" y="774.500" textLength="131" lengthAdjust="spacingAndGlyphs">ENTERTAINMENT AREA</text><text x="988.500" y="787" textLength="55" lengthAdjust="spacingAndGlyphs">Kids Games</text><text x="988.500" y="797.500" textLength="66" lengthAdjust="spacingAndGlyphs">Carnival Rides</text><text x="988.500" y="808.500" textLength="129" lengthAdjust="spacingAndGlyphs">International Festival Foods</text><text x="988.500" y="819" textLength="83" lengthAdjust="spacingAndGlyphs">Street Performers</text><text x="1059" y="819" textLength="63" lengthAdjust="spacingAndGlyphs" style="font-size:7.800px">(in case of rain,</text><text x="988.500" y="829.500" textLength="145" lengthAdjust="spacingAndGlyphs" style="font-size:7.800px">performers will be in Center Ithaca)</text>
      <text class="b" x="988.500" y="859.500" textLength="127" lengthAdjust="spacingAndGlyphs">BERNIE MILTON STAGE</text>
      <text class="b" x="988.500" y="892" textLength="79" lengthAdjust="spacingAndGlyphs">DEWITT PARK</text><text x="988.500" y="902.500" textLength="112" lengthAdjust="spacingAndGlyphs">First People’s Festival</text><text x="988.500" y="913.500" textLength="178" lengthAdjust="spacingAndGlyphs" style="font-size:9.500px">(Sunday Only, 11am-5pm, Dewitt Park)</text>
      <text class="b" x="988.500" y="939.500" textLength="95" lengthAdjust="spacingAndGlyphs">MORE SHOPPING</text><text x="988.500" y="951" textLength="174" lengthAdjust="spacingAndGlyphs" style="font-size:9.300px">Weekend deals, activities and special</text><text x="988.500" y="962.500" textLength="157" lengthAdjust="spacingAndGlyphs" style="font-size:9.300px">menus inside shops &amp; restaurants</text>
      <text class="b" x="990" y="988.500" textLength="67" lengthAdjust="spacingAndGlyphs">CRAFT FAIR</text>
    </g>
    <g transform="translate(1033.500 1052)">
      <circle r="15.500" fill="#2eb2dc" stroke="#222" stroke-width="1.400" stroke-dasharray="7 3"/><path d="M-9-9L0-4L9-9L4 0L9 9L0 4L-9 9L-4 0Z" fill="#89c6a7" stroke="#436f66" stroke-width=".4"/><path d="M0-24L3-4L24 0L4 3L0 24L-3 4L-24 0L-4-3Z" fill="#f1e568" stroke="#766f30" stroke-width=".5"/><circle r="5" fill="#fff" stroke="#111" stroke-width=".6"/><path d="M0 0V-5A5 5 0 0 0-5 0ZM0 0V5A5 5 0 0 0 5 0Z" fill="#111"/>
      <g text-anchor="middle"><text y="-24" style="font-family:'Liberation Serif';font-size:12px;fill:#777">N</text><text y="31" style="font-family:'Liberation Serif';font-size:9px;fill:#777">S</text><text x="-28" y="3" style="font-family:'Liberation Serif';font-size:8px;fill:#777">W</text><text x="28.500" y="3" style="font-family:'Liberation Serif';font-size:9px;fill:#777">E</text></g>
    </g>
    <rect x="961.500" y="1094" width="147" height="111" rx="4" fill="#fff" stroke="#a8e1e5" stroke-width="1.200"/><path d="M966 1099.500H1104V1117.500H966Z" fill="#d02128"/><text x="1035" y="1113" text-anchor="middle" textLength="76" lengthAdjust="spacingAndGlyphs" style="font-family:Inter,sans-serif;font-size:12.500px;font-weight:500;fill:#fff">LEGEND</text>
    <use href="#cow" transform="translate(985 1132) scale(1.100)"/><path class="dk" d="M975 1146.500H994V1165.500H975Z"/><text x="984.500" y="1162" text-anchor="middle" textLength="12" lengthAdjust="spacingAndGlyphs" style="font-size:17px;font-weight:700;fill:#fff">P</text><path class="cm" d="M975 1169H994V1189H975Z"/>
    <use href="#rr" transform="translate(1045.500 1133) scale(.74)"/><use href="#inf" transform="translate(1046.500 1156) scale(.85)"/><use href="#dot" x="1047" y="1180.500"/>
    <g class="lg"><text x="996" y="1132.500" textLength="18" lengthAdjust="spacingAndGlyphs">TCAT</text><text x="996" y="1141.500" textLength="31" lengthAdjust="spacingAndGlyphs">Bus Stop</text><text x="996" y="1155" textLength="22" lengthAdjust="spacingAndGlyphs">Public</text><text x="996" y="1163.500" textLength="27" lengthAdjust="spacingAndGlyphs">Parking</text><text x="996" y="1178" textLength="21" lengthAdjust="spacingAndGlyphs">Ithaca</text><text x="996" y="1186.500" textLength="35" lengthAdjust="spacingAndGlyphs">Commons</text><text x="1058.500" y="1138" textLength="35" lengthAdjust="spacingAndGlyphs">Restrooms</text><text x="1059" y="1156.500" textLength="23" lengthAdjust="spacingAndGlyphs">Visitor</text><text x="1059" y="1165" textLength="41" lengthAdjust="spacingAndGlyphs">Information</text><text x="1059" y="1181" textLength="29" lengthAdjust="spacingAndGlyphs">Compost</text><text x="1059" y="1191.500" textLength="31" lengthAdjust="spacingAndGlyphs">Recycling</text><text x="1059" y="1201.500" textLength="18" lengthAdjust="spacingAndGlyphs">Trash</text></g>
  </svg>
</main>
<footer class="foot"><a href="#">Downtown Ithaca</a></footer>
<script src="https://cdn.jsdelivr.net/npm/bootstrap@5.3.0/dist/js/bootstrap.bundle.min.js"></script>
</body>
</html>
